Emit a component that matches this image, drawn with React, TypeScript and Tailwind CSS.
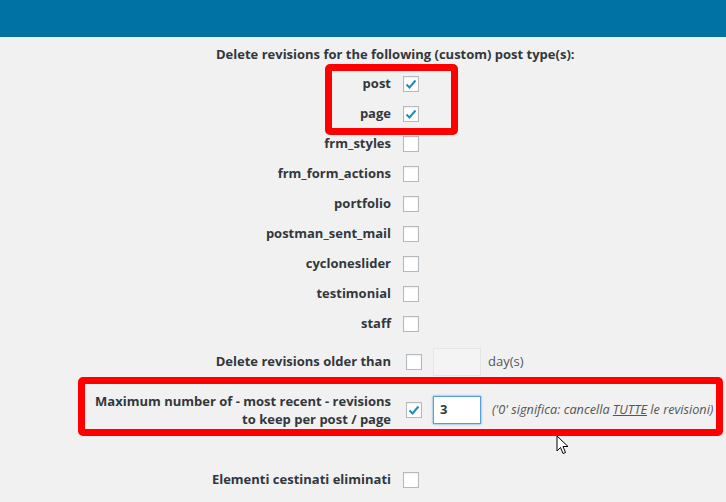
import React from 'react';

const postTypes = [
  { name: 'post', checked: true },
  { name: 'page', checked: true },
  { name: 'frm_styles', checked: false },
  { name: 'frm_form_actions', checked: false },
  { name: 'portfolio', checked: false },
  { name: 'postman_sent_mail', checked: false },
  { name: 'cycloneslider', checked: false },
  { name: 'testimonial', checked: false },
  { name: 'staff', checked: false },
];

function Box({ checked }: { checked?: boolean }) {
  return (
    <span className="flex h-4 w-4 items-center justify-center border border-[#b4b9be] bg-white shadow-[inset_0_1px_2px_rgba(0,0,0,0.07)]">
      {checked && (
        <svg width="12" height="12" viewBox="0 0 12 12">
          <path d="M1.5 6.5 L4.5 9.5 L10.5 2.5" fill="none" stroke="#1e8cbe" strokeWidth="2" />
        </svg>
      )}
    </span>
  );
}

export default function App() {
  return (
    <div
      className="relative h-[502px] w-[726px] overflow-hidden bg-[#f1f1f1] text-[13px] text-[#32373c]"
      style={{ fontFamily: '"Open Sans", "Noto Sans", sans-serif' }}
    >
      {/* admin bar */}
      <div className="h-[37px] bg-[#0073a5]" />

      <div className="pt-[9px]">
        <div className="pl-[216px] text-[13px] font-bold leading-[16px]">
          Delete revisions for the following (custom) post type(s):
        </div>

        <div className="mt-[7px]">
          {postTypes.map((t) => (
            <div key={t.name} className="flex h-[30px] items-center">
              <div className="w-[391px] text-right font-bold">{t.name}</div>
              <div className="ml-[12px]">
                <Box checked={t.checked} />
              </div>
            </div>
          ))}
        </div>

        <div className="mt-[8px] flex h-[30px] items-center">
          <div className="w-[391px] text-right font-bold">Delete revisions older than</div>
          <div className="ml-[15px]">
            <Box />
          </div>
          <div className="ml-[11px] h-[28px] w-[48px] border border-[#e5e5e5] bg-[#f4f4f4]" />
          <span className="ml-[7px] text-[#555]">day(s)</span>
        </div>

        <div className="mt-[10px] flex h-[46px] items-center">
          <div className="w-[391px] text-right font-bold leading-[18px]">
            Maximum number of - most recent - revisions
            <br />
            to keep per post / page
          </div>
          <div className="ml-[15px]">
            <Box checked />
          </div>
          <div className="ml-[11px] flex h-[28px] w-[48px] items-center border border-[#5b9dd9] bg-white pl-[6px] font-bold text-[#32373c] shadow-[0_0_2px_rgba(30,140,190,0.8)]">
            3
          </div>
          <span className="ml-[11px] whitespace-nowrap text-[12.7px] italic text-[#555]">
            ('0' significa: cancella <span className="underline">TUTTE</span> le revisioni)
          </span>
        </div>

        <div className="mt-[32px] flex h-[30px] items-center">
          <div className="w-[391px] text-right font-bold">Elementi cestinati eliminati</div>
          <div className="ml-[12px]">
            <Box />
          </div>
        </div>
      </div>

      {/* red annotation boxes */}
      <div className="absolute left-[325px] top-[64px] h-[71px] w-[133px] rounded-[5px] border-[7px] border-[#ff0000]" />
      <div className="absolute left-[78px] top-[377px] h-[59px] w-[645px] rounded-[5px] border-[7px] border-[#ff0000]" />

      {/* mouse cursor */}
      <svg className="absolute left-[556px] top-[435px]" width="14" height="22" viewBox="0 0 14 22">
        <path
          d="M1 1 L1 16 L4.5 12.5 L7 18.5 L9.5 17.5 L7 11.5 L12 11.5 Z"
          fill="#fff"
          stroke="#000"
          strokeWidth="1"
        />
      </svg>
    </div>
  );
}
